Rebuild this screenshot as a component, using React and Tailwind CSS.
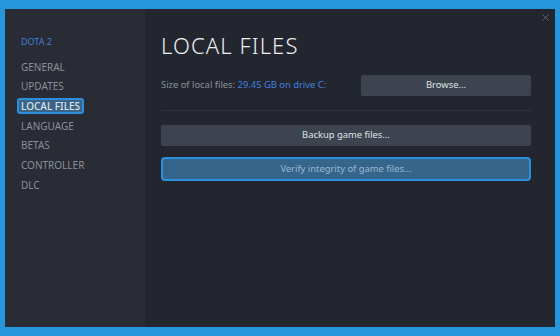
import { X } from "lucide-react";

const navItems = ["GENERAL", "UPDATES", "LOCAL FILES", "LANGUAGE", "BETAS", "CONTROLLER", "DLC"];

export default function App() {
  return (
    <div className="w-[560px] h-[336px] bg-[#2795db] pt-[9px] px-[5px] pb-[9px] font-['Noto_Sans',sans-serif]">
      <div className="flex h-full bg-[#23262e]">
        {/* sidebar */}
        <div className="w-[140px] bg-[#292c34] pl-[12px] pt-[27px]">
          <div className="pl-[4px] text-[9px] leading-[12px] text-[#3f7fd8] mb-[11px]">DOTA 2</div>
          <div className="flex flex-col gap-[3.7px]">
            {navItems.map((item) =>
              item === "LOCAL FILES" ? (
                <div key={item} className="self-start h-[16px] px-[2px] flex items-center rounded-[3px] border-2 border-[#2a90dc] bg-[#3a6588] text-[10px] text-[#dde3ea] font-medium">
                  {item}
                </div>
              ) : (
                <div key={item} className="h-[16px] pl-[4px] flex items-center text-[10px] text-[#8a8f98]">
                  {item}
                </div>
              )
            )}
          </div>
        </div>

        {/* content */}
        <div className="flex-1 relative pl-[16px] pr-[24px] pt-[21px]">
          <X className="absolute right-[4px] top-[3px] w-[11px] h-[11px] text-[#6d7480]" strokeWidth={1.75} />
          <h1 className="text-[22px] leading-[30px] font-light tracking-[1.1px] text-[#eceef0]">LOCAL FILES</h1>

          <div className="mt-[15px] flex items-center justify-between">
            <div className="text-[9.4px] text-[#8a9099]">
              Size of local files: <span className="text-[#3f80e0]">29.45 GB on drive C:</span>
            </div>
            <div className="w-[170px] h-[21px] flex items-center justify-center rounded-[2px] bg-[#3d4450] text-[9.4px] text-[#dfe1e4]">
              Browse...
            </div>
          </div>

          <div className="mt-[14px] h-px bg-[#2f333b]" />

          <div className="mt-[14px] h-[21px] flex items-center justify-center rounded-[2px] bg-[#3d4450] text-[9.4px] text-[#dfe1e4]">
            Backup game files...
          </div>

          <div className="mt-[11px] h-[24px] flex items-center justify-center rounded-[4px] border-2 border-[#2a90dc] bg-[#35658a] text-[9.4px] text-[#9bb8d2]">
            Verify integrity of game files...
          </div>
        </div>
      </div>
    </div>
  );
}
